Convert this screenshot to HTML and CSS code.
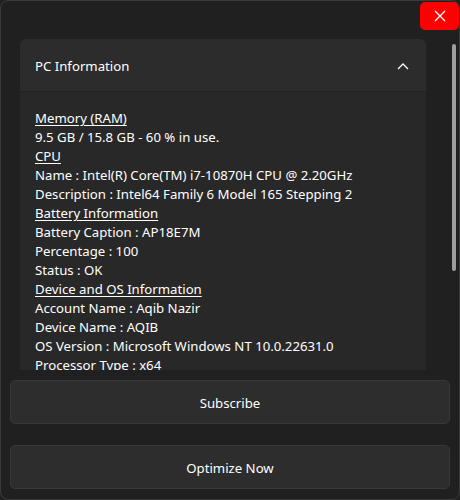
FILE: index.html
```html
<!DOCTYPE html>
<html>
<head>
<meta charset="utf-8">
<link rel="stylesheet" href="styles.css">
</head>
<body>
<div class="window">
  <div class="titlebar">
    <button class="close" aria-label="Close">
      <svg width="12" height="12" viewBox="0 0 12 12"><path d="M1 1 L11 11 M11 1 L1 11" stroke="#fff" stroke-width="1.3" fill="none"/></svg>
    </button>
  </div>
  <div class="scroller">
    <div class="scroll-content">
      <div class="card">
        <div class="card-header">
          <span>PC Information</span>
          <svg class="chevron" width="12" height="8" viewBox="0 0 12 8"><path d="M1 7 L6 2 L11 7" stroke="#fff" stroke-width="1.3" fill="none"/></svg>
        </div>
        <div class="card-body">
          <div class="sec">Memory (RAM)</div>
          <div>9.5 GB / 15.8 GB - 60 % in use.</div>
          <div class="sec">CPU</div>
          <div>Name : Intel(R) Core(TM) i7-10870H CPU @ 2.20GHz</div>
          <div>Description : Intel64 Family 6 Model 165 Stepping 2</div>
          <div class="sec">Battery Information</div>
          <div>Battery Caption : AP18E7M</div>
          <div>Percentage : 100</div>
          <div>Status : OK</div>
          <div class="sec">Device and OS Information</div>
          <div>Account Name : Aqib Nazir</div>
          <div>Device Name : AQIB</div>
          <div>OS Version : Microsoft Windows NT 10.0.22631.0</div>
          <div>Processor Type : x64</div>
        </div>
      </div>
    </div>
    <div class="scrollbar"><div class="thumb"></div></div>
  </div>
  <div class="actions">
    <button class="btn">Subscribe</button>
    <button class="btn">Optimize Now</button>
  </div>
</div>
</body>
</html>
```
FILE: styles.css
```css
* { box-sizing: border-box; }
html, body { margin: 0; padding: 0; background: #202020; }
body { font-family: "Noto Sans", "Open Sans", sans-serif; color: #ffffff; }
.window {
  position: relative;
  width: 460px;
  height: 500px;
  background: #202020;
  border: 1px solid #3a3a3a;
  border-radius: 8px;
  display: flex;
  flex-direction: column;
  overflow: hidden;
}
.titlebar { height: 38px; flex: none; }
.close {
  position: absolute;
  top: 1px;
  right: 0;
  width: 39px;
  height: 28px;
  background: #ff0000;
  border: none;
  border-radius: 5px;
  display: flex;
  align-items: center;
  justify-content: center;
  padding: 0;
}
.close svg { display: block; }
.scroller {
  height: 331px;
  flex: none;
  display: flex;
  overflow: hidden;
}
.scroll-content { width: 426px; padding-left: 19px; overflow: hidden; }
.card {
  width: 406px;
  border-radius: 6px 6px 0 0;
  overflow: hidden;
}
.card-header {
  height: 53px;
  background: #2c2c2c;
  border-bottom: 1px solid #232323;
  display: flex;
  align-items: center;
  justify-content: space-between;
  padding: 1px 17px 0 15px;
  font-size: 13.2px;
}
.chevron { display: block; }
.card-body {
  background: #282828;
  padding: 17px 15px 20px 15px;
  font-size: 13.2px;
  line-height: 19px;
  white-space: nowrap;
}
.sec { text-decoration: underline; text-underline-offset: 2px; }
.scrollbar {
  width: 4px;
  margin-left: 25px;
  padding-top: 5px;
}
.thumb {
  width: 4px;
  height: 227px;
  background: #9d9d9d;
  border-radius: 2px;
}
.actions {
  padding: 10px 9px 0 9px;
  display: flex;
  flex-direction: column;
  gap: 21px;
}
.btn {
  height: 44px;
  width: 440px;
  background: #2d2d2d;
  border: 1px solid #383838;
  border-radius: 5px;
  color: #ffffff;
  font-family: "Noto Sans", "Open Sans", sans-serif;
  font-size: 13.2px;
  padding: 1px 0 0 0;
}
```
